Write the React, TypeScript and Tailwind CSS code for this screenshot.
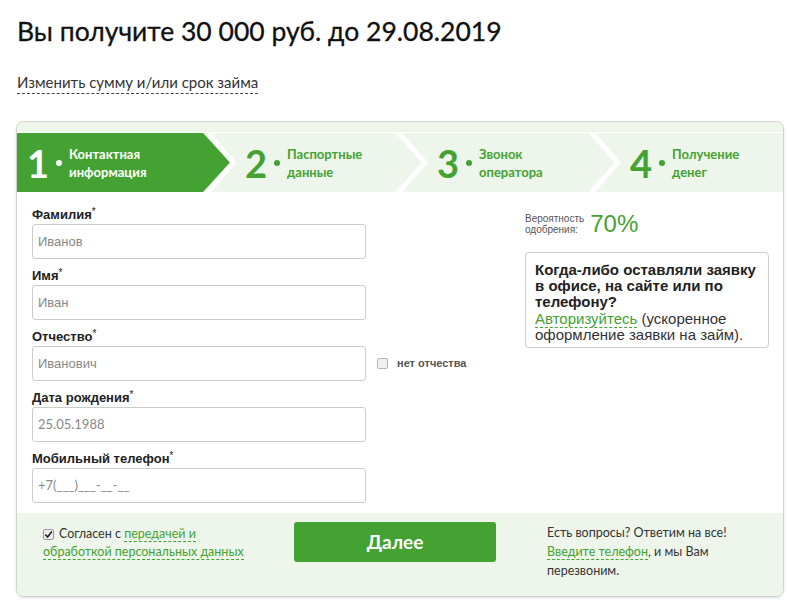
import React from "react";

const green = "#44a232";

const steps = [
  { n: "1", a: "Контактная", b: "информация", pad: "pl-[10px]" },
  { n: "2", a: "Паспортные", b: "данные", pad: "pl-[37px]" },
  { n: "3", a: "Звонок", b: "оператора", pad: "pl-[38px]" },
  { n: "4", a: "Получение", b: "денег", pad: "pl-[39px]" },
];

const fields = [
  { label: "Фамилия", ph: "Иванов" },
  { label: "Имя", ph: "Иван" },
  { label: "Отчество", ph: "Иванович", extra: true },
  { label: "Дата рождения", ph: "25.05.1988", lato: true },
  { label: "Мобильный телефон", ph: "+7(___)___-__-__", lato: true },
];

const StepsBar = () => (
  <div className="relative h-[59px] bg-[#eef5ea]">
    <svg className="absolute inset-0" width="765" height="59" viewBox="0 0 765 59">
      <polygon points="0,0 186,0 213,29.5 186,59 0,59" fill={green} />
      <polyline points="189,-2 216.5,29.5 189,61" fill="none" stroke="#fff" strokeWidth="5" />
      <polyline points="380,-2 408,29.5 380,61" fill="none" stroke="#fff" strokeWidth="5" />
      <polyline points="573,-2 601,29.5 573,61" fill="none" stroke="#fff" strokeWidth="5" />
    </svg>
    <div className="relative grid h-full grid-cols-[191px_191px_192px_191px]">
      {steps.map((s, i) => {
        const active = i === 0;
        return (
          <div key={s.n} className={`flex items-center ${s.pad}`}>
            <span
              className={`font-['Lato',sans-serif] text-[38px] leading-none font-bold ${
                active ? "text-white" : "text-[#44a232]"
              }`}
            >
              {s.n}
            </span>
            <span
              className={`mx-[7px] h-[6px] w-[6px] rounded-full ${active ? "bg-white" : "bg-[#44a232]"}`}
            />
            <div
              className={`font-['Lato',sans-serif] text-[13px] leading-[18px] font-bold ${
                active ? "text-white" : "text-[#44a232]"
              }`}
            >
              <div>{s.a}</div>
              <div>{s.b}</div>
            </div>
          </div>
        );
      })}
    </div>
  </div>
);

export default function App() {
  return (
    <div className="min-h-screen bg-white px-4 pt-[14px] text-[#222]">
      <h1 className="pl-px font-['Lato',sans-serif] text-[26.5px] leading-[34px] text-[#111] [-webkit-text-stroke:0.3px_#111]">
        Вы получите 30 000 руб. до 29.08.2019
      </h1>
      <div className="mt-[22px] pl-px">
        <span className="border-b border-dashed border-[#444] pb-[2px] font-['Lato',sans-serif] text-[15px] leading-[20px] text-[#333]">
          Изменить сумму и/или срок займа
        </span>
      </div>

      <div className="mt-[27px] w-[768px] overflow-hidden rounded-lg border border-[#cfd4cc] shadow-[0_1px_2px_rgba(0,0,0,0.15)]">
        <div className="h-[10px] bg-[#eef5ea]" />
        <div className="h-[1px] bg-white" />
        <StepsBar />

        <div className="flex bg-white pt-[15px] pb-[10px]">
          <div className="w-[508px] pl-[15px] font-['Liberation_Sans',Arial,sans-serif]">
            {fields.map((f, i) => (
              <div key={f.label} className={i > 0 ? "mt-[9px]" : ""}>
                <div className="mb-[2px] h-[15px] text-[13px] leading-[15px] font-bold text-[#222]">
                  {f.label}
                  <span className="align-top text-[10px] leading-none font-normal">*</span>
                </div>
                <div className="flex items-center">
                  <div
                    className={`flex h-[35px] w-[334px] items-center rounded-[3px] border border-[#cccccc] px-[5px] text-[13px] text-[#888] ${
                      f.lato ? "font-['Lato',sans-serif]" : ""
                    }`}
                  >
                    {f.ph}
                  </div>
                  {f.extra && (
                    <div className="ml-[11px] flex items-center">
                      <span className="h-[11px] w-[11px] rounded-[2px] border border-[#b5b5b5] bg-[#f0f0f0]" />
                      <span className="ml-[9px] text-[11px] font-bold text-[#555]">нет отчества</span>
                    </div>
                  )}
                </div>
              </div>
            ))}
          </div>

          <div className="pt-[5px] font-['Liberation_Sans',Arial,sans-serif]">
            <div className="flex items-center">
              <div className="text-[10px] leading-[11px] text-[#555]">
                <div>Вероятность</div>
                <div>одобрения:</div>
              </div>
              <span className="ml-[6px] text-[24px] leading-none text-[#44a232]">70%</span>
            </div>
            <div className="mt-[16px] w-[244px] rounded-[4px] border border-[#cccccc] px-[9px] pt-[9px] pb-[4px]">
              <div className="text-[15px] leading-[16px] font-bold text-[#222]">
                Когда-либо оставляли заявку в офисе, на сайте или по телефону?
              </div>
              <div className="mt-[1px] text-[15px] leading-[16px] whitespace-nowrap text-[#333]">
                <div>
                  <span className="border-b border-dashed border-[#44a232] text-[#44a232]">Авторизуйтесь</span>
                  <span> (ускоренное</span>
                </div>
                <div>оформление заявки на займ).</div>
              </div>
            </div>
          </div>
        </div>

        <div className="flex h-[83px] bg-[#eef5ea] pt-[9px] font-['Lato',sans-serif] text-[12.5px] text-[#333]">
          <div className="w-[277px] pt-[3px] pl-[26px] leading-[18px]">
            <span className="relative top-[1px] mr-[5px] inline-flex h-[11px] w-[11px] items-center justify-center rounded-[2px] border border-[#9a9a9a] bg-[#eee] align-baseline">
              <svg width="9" height="9" viewBox="0 0 10 10">
                <path d="M1.5 5.2 L4 7.8 L8.7 1.8" fill="none" stroke="#222" strokeWidth="1.8" />
              </svg>
            </span>
            Согласен с{" "}
            <span className="border-b border-dashed border-[#44a232] text-[#44a232]">передачей и</span>
            <br />
            <span className="border-b border-dashed border-[#44a232] text-[#44a232]">
              обработкой персональных данных
            </span>
          </div>
          <button className="flex h-[40px] w-[202px] items-center justify-center rounded-[3px] bg-[#44a232] text-[19px] font-bold text-white">
            Далее
          </button>
          <div className="ml-[51px] pt-[1px] leading-[19px]">
            <div>Есть вопросы? Ответим на все!</div>
            <div>
              <span className="border-b border-dashed border-[#44a232] text-[#44a232]">Введите телефон</span>, и мы Вам
            </div>
            <div>перезвоним.</div>
          </div>
        </div>
      </div>
    </div>
  );
}
